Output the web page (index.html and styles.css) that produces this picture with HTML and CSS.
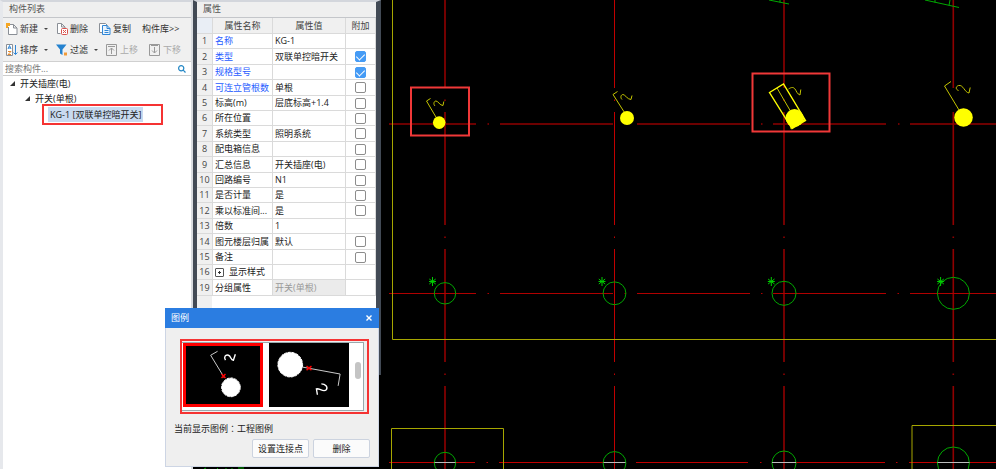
FILE: index.html
```html
<!DOCTYPE html>
<html lang="zh-CN">
<head>
  <meta charset="UTF-8">
  <meta name="viewport" content="width=device-width, initial-scale=1.0">
  <title>构件列表</title>
  <link rel="stylesheet" href="styles.css">
</head>
<body>
  <div class="workspace">

    <!-- drawing area -->
    <svg class="canvas" viewBox="193 0 803 469" preserveAspectRatio="xMinYMin slice">
      <g class="axis">
        <path class="thick" d="M445 0V88M445 99.500v1.500M445 112V225M445 236.500v1.500M445 249V362M445 373.500v1.500M445 386V469"/>
        <path class="bright" d="M614.500 0V88M614.500 99.500v1.500M614.500 112V225M614.500 236.500v1.500M614.500 249V362M614.500 373.500v1.500M614.500 386V469"/>
        <path class="thick" d="M784 0V88M784 99.500v1.500M784 112V225M784 236.500v1.500M784 249V362M784 373.500v1.500M784 386V469"/>
        <path class="thick" d="M953.300 0V88M953.300 112V225M953.300 236.500v1.500M953.300 249V362M953.300 373.500v1.500M953.300 386V469"/>
        <path class="thick" d="M389 124H476M487.500 124h1.500M500 124H613M637 124H750M761 124h1.500M773 124H886M898 124h1.500M910 124H996"/>
        <path d="M389 293.500H476M487.500 293.500h1.500M500 293.500H613M624.500 293.500h1.500M637 293.500H750M761 293.500h1.500M773 293.500H886M897.500 293.500h1.500M910 293.500H996"/>
        <path class="bright" d="M389 462.500H475M486.500 462.500h1.500M499 462.500H612M636 462.500H748M760 462.500h1.500M772 462.500H885M896 462.500h1.500M909 462.500H996"/>
      </g>
      <g class="wall">
        <path d="M392.500 0V339.500H996"/>
        <path d="M391.500 469V428.500H503.500V469"/>
        <path d="M912 469V425.500H996"/>
      </g>
      <g class="column">
        <circle cx="445" cy="293.300" r="10.700"/>
        <circle cx="614.500" cy="293.300" r="11.400"/>
        <circle cx="784" cy="293.300" r="12"/>
        <circle cx="953.400" cy="293.300" r="16"/>
        <circle cx="445" cy="463" r="10.700"/>
        <circle cx="614.500" cy="463" r="11.400"/>
        <circle cx="784" cy="463" r="12"/>
        <circle cx="953.400" cy="463" r="16"/>
        <path d="M769 0l20 4M780 0v2.500M925 0l34 7.500M935 0v2.500M950 0l-1 5.500"/>
        <path d="M204 469l2-1M217 469l1-1M226 468v1M232 468v1M238 468h6"/>
      </g>
      <g class="star">
        <path d="M432.500 277v9M429.300 279l6.400 5M435.700 279l-6.400 5M429 281.500h7"/>
        <path d="M602 277v9M598.800 279l6.400 5M605.200 279l-6.400 5M598.500 281.500h7"/>
        <path d="M771.300 277v9M768.100 279l6.400 5M774.500 279l-6.400 5M767.800 281.500h7"/>
        <path d="M940.600 277v9M937.400 279l6.400 5M943.800 279l-6.400 5M937.100 281.500h7"/>
      </g>
      <path class="beam" d="M434.500 462.500h21M603.500 462.500h22M772 462.500h24M937.500 462.500h32"/>
      <g class="switch">
        <path d="M430.500 98.500l-4 2.500 10 17M435 106c-2-2-1-5 1-5s4 4.500 7 4.500l.800-4"/>
        <circle cx="439.200" cy="122.600" r="6.300"/>
        <path d="M617.500 91.500l-4.500 3 11.500 18M622 99.500c-2-2-1-5 1-5s4.500 5 8 5l1-4"/>
        <circle cx="627" cy="118" r="7"/>
        <path d="M777 88l14 24M788.500 89c3-2 5-2 6.500 0s2 5 5 6l.800-5.500"/>
        <path class="picked" d="M769.500 92.500l14-8.500 22 36.500-13.500 8zM791 125v2.500l3-1.500M802.500 118l2 2-2.500 1.500"/>
        <circle cx="794.500" cy="118" r="9"/>
        <path d="M951 81.500l-6.500 4.500 14.500 24M958.500 90.500c-3-1-3-4 0-5 5-1 6 7 10.500 7.500l1.200-5.500"/>
        <circle cx="963.500" cy="117.500" r="9.300"/>
      </g>
      <g class="mark">
        <rect x="411" y="87.500" width="58" height="48"/>
        <rect x="752.500" y="73.500" width="77" height="58"/>
      </g>
    </svg>

    <aside class="panel list-panel">
      <h2 class="panel-title">构件列表</h2>
      <div class="toolbar">
        <div class="tool-row">
          <button class="tool drop"><svg class="icon" viewBox="0 0 12 12"><path class="ln" d="M3 1.500h4.500L11 5v6.500H2.500V4M7.500 1.500V5H11"/><path fill="#f5a623" d="M0 0h4v3H2v2H0z"/></svg>新建</button>
          <button class="tool"><svg class="icon" viewBox="0 0 12 12"><path class="ln" d="M4.500 10.500H1.500V.500h4L9 4v1M5.500.500V4H9"/><rect x="5.500" y="5.500" width="6" height="6" rx="1" fill="#fff" stroke="#d9534f"/><path stroke="#d9534f" d="M7 7l3 3M10 7l-3 3"/></svg>删除</button>
          <button class="tool"><svg class="icon" viewBox="0 0 12 12"><path class="ln" d="M3 9.500H.500V.500h6l2 2"/><path fill="#eaf4fd" stroke="#2f86d6" d="M3.500 2.500H8L11 5.500v6H3.500zM8 2.500v3h3M5.500 7.500h4M5.500 9.500h4"/></svg>复制</button>
          <button class="tool">构件库&gt;&gt;</button>
        </div>
        <div class="tool-row">
          <button class="tool drop"><svg class="icon" viewBox="0 0 12 12"><path class="ln" d="M.500.500h6v11h-6z"/><path fill="none" stroke="#2f86d6" d="M2 5l1.500-3.500L5 5M2.500 4h2M9.500 1v9.500M7.500 8.500l2 2 2-2"/><path fill="none" stroke="#e58a2e" d="M2 7.500h3L2 10.500h3"/></svg>排序</button>
          <button class="tool drop"><svg class="icon" viewBox="0 0 12 12"><path fill="#2482cf" d="M0 .500h10.500L6.500 5.500V11L4 9.500v-4z"/><path fill="#f29b38" d="M8 8.500h3v3H8z"/></svg>过滤</button>
          <button class="tool" disabled><svg class="icon" viewBox="0 0 12 12"><path fill="none" stroke="#999" d="M.500.500h10v11H.500zM2 2.500h7M5.500 10V4M3 6.500L5.500 4 8 6.500"/></svg>上移</button>
          <button class="tool" disabled><svg class="icon" viewBox="0 0 12 12"><path fill="none" stroke="#999" d="M.500.500h10v11H.500zM2 1.500h7M5.500 3v6M3 6.500L5.500 9 8 6.500"/></svg>下移</button>
        </div>
      </div>
      <div class="search">
        <input class="search-input" type="search" placeholder="搜索构件..." aria-label="搜索构件">
        <button class="search-btn" aria-label="搜索"><svg class="search-icon" viewBox="0 0 8 8"><circle cx="3.200" cy="3.200" r="2.600"/><path d="M5.200 5.200L7.500 7.500"/></svg></button>
      </div>
      <ul class="tree">
        <li>
          <span class="node">开关插座(电)</span>
          <ul>
            <li>
              <span class="node">开关(单根)</span>
              <div class="leaf-mark"><span class="leaf">KG-1 [双联单控暗开关]</span></div>
            </li>
          </ul>
        </li>
      </ul>
    </aside>

    <section class="panel prop-panel">
      <h2 class="panel-title">属性</h2>
      <table class="props">
        <colgroup><col class="c-num"><col class="c-name"><col><col class="c-add"></colgroup>
        <thead>
          <tr><th></th><th>属性名称</th><th>属性值</th><th>附加</th></tr>
        </thead>
        <tbody>
          <tr><th>1</th><td class="key">名称</td><td>KG-1</td><td></td></tr>
          <tr><th>2</th><td class="key">类型</td><td>双联单控暗开关</td><td><input type="checkbox" aria-label="类型" checked></td></tr>
          <tr><th>3</th><td class="key">规格型号</td><td></td><td><input type="checkbox" aria-label="规格型号" checked></td></tr>
          <tr><th>4</th><td class="key">可连立管根数</td><td>单根</td><td><input type="checkbox" aria-label="可连立管根数"></td></tr>
          <tr><th>5</th><td>标高(m)</td><td>层底标高+1.4</td><td><input type="checkbox" aria-label="标高"></td></tr>
          <tr><th>6</th><td>所在位置</td><td></td><td><input type="checkbox" aria-label="所在位置"></td></tr>
          <tr><th>7</th><td>系统类型</td><td>照明系统</td><td><input type="checkbox" aria-label="系统类型"></td></tr>
          <tr><th>8</th><td>配电箱信息</td><td></td><td><input type="checkbox" aria-label="配电箱信息"></td></tr>
          <tr><th>9</th><td>汇总信息</td><td>开关插座(电)</td><td><input type="checkbox" aria-label="汇总信息"></td></tr>
          <tr><th>10</th><td>回路编号</td><td>N1</td><td><input type="checkbox" aria-label="回路编号"></td></tr>
          <tr><th>11</th><td>是否计量</td><td>是</td><td><input type="checkbox" aria-label="是否计量"></td></tr>
          <tr><th>12</th><td>乘以标准间...</td><td>是</td><td><input type="checkbox" aria-label="乘以标准间"></td></tr>
          <tr><th>13</th><td>倍数</td><td>1</td><td></td></tr>
          <tr><th>14</th><td>图元楼层归属</td><td>默认</td><td><input type="checkbox" aria-label="图元楼层归属"></td></tr>
          <tr><th>15</th><td>备注</td><td></td><td><input type="checkbox" aria-label="备注"></td></tr>
          <tr><th>16</th><td><button class="expand" aria-label="展开显示样式"></button>显示样式</td><td></td><td></td></tr>
          <tr><th>19</th><td>分组属性</td><td class="locked">开关(单根)</td><td></td></tr>
        </tbody>
      </table>
    </section>

    <div class="dialog" role="dialog" aria-labelledby="legend-title">
      <header class="dialog-head">
        <h2 id="legend-title">图例</h2>
        <button class="close" aria-label="关闭"><svg viewBox="0 0 6 6"><path d="M.500.500l5 5M5.500.500l-5 5"/></svg></button>
      </header>
      <div class="dialog-body">
        <div class="legend-mark">
          <div class="legend-list">
            <button class="legend selected" aria-label="图例 1">
              <svg viewBox="0 0 81 64">
                <path d="M35 8l-7 4 14 23"/>
                <path class="num" d="M43 17c-2-3 0-6 3-5 3 1 2 5 5 5l2-6"/>
                <circle cx="48.500" cy="44.500" r="9.500"/>
                <path class="joint" d="M39 31l4 4M43 31l-4 4"/>
              </svg>
            </button>
            <button class="legend" aria-label="图例 2">
              <svg viewBox="0 0 81 64">
                <path d="M34 24l38 7-2 12"/>
                <path class="num" d="M53 41c4 0 7 3 5 6-3 3-7-2-10-1l1 6"/>
                <circle cx="21.500" cy="21.500" r="12.500"/>
                <path class="joint" d="M38 23l5 4M43 23l-5 4"/>
              </svg>
            </button>
            <span class="scrollbar"></span>
          </div>
        </div>
        <p class="current">当前显示图例<span class="colon" lang="zh-TW">：</span>工程图例</p>
        <div class="actions">
          <button class="btn">设置连接点</button>
          <button class="btn">删除</button>
        </div>
      </div>
    </div>

  </div>
</body>
</html>
```
FILE: styles.css
```css
* {
  box-sizing: border-box;
}

body {
  margin: 0;
  background: #000;
  color: #222;
  font-family: "Open Sans", "Noto Sans CJK SC", sans-serif;
  font-size: 9px;
  line-height: 14px;
}

h2, p, ul {
  margin: 0;
  padding: 0;
  font-size: 9px;
  font-weight: 400;
}

button, input {
  margin: 0;
  padding: 0;
  border: none;
  background: none;
  color: inherit;
  font: inherit;
}

.workspace {
  position: relative;
  display: grid;
  grid-template-columns: 193px 188px 1fr;
  grid-template-rows: 100vh;
  overflow: hidden;
}

/* drawing area */

.canvas {
  grid-area: 1 / 2 / 2 / 4;
  width: 100%;
  height: 100%;
  fill: none;
}

.axis path {
  stroke: #b00000;
}

.axis .thick {
  stroke: #900000;
  stroke-width: 1.6;
}

.axis .bright {
  stroke: #c00000;
}

.wall path {
  stroke: #a6a600;
}

.column {
  stroke: #00a800;
}

.star {
  stroke: #00cc00;
}

.beam {
  stroke: #bbb;
}

.switch path {
  stroke: #c4c400;
}

.switch .picked {
  stroke: #ff0;
  stroke-width: 1.4;
}

.switch circle {
  fill: #ff0;
}

.mark rect {
  stroke: #f03838;
  stroke-width: 2;
}

/* panels */

.panel {
  background: #fff;
  border-top: 2px solid #d3d6dc;
}

.panel-title {
  height: 16px;
  padding-left: 6px;
  border-bottom: 1px solid #c4c6ca;
  background: #efefef;
  color: #555;
}

.list-panel {
  grid-area: 1 / 1;
  border-left: 3px solid #e6e8ec;
  border-right: 2px solid #d9dce0;
}

.toolbar {
  display: flex;
  flex-direction: column;
  gap: 5px;
  padding: 3px 3px;
  border-bottom: 1px solid #d0d0d0;
  background: #f0f0f0;
}

.tool-row {
  display: flex;
  gap: 11px;
}

.tool {
  display: flex;
  align-items: center;
  gap: 2px;
  height: 16px;
  color: #333;
  white-space: nowrap;
}

.tool:disabled {
  color: #aaa;
}

.drop {
  margin-right: -3px;
}

.drop::after {
  content: "";
  margin-left: 4px;
  border: 2px solid transparent;
  border-top-color: #444;
  border-bottom: none;
}

.icon {
  width: 12px;
  height: 12px;
}

.icon .ln {
  fill: #fff;
  stroke: #8a8f96;
}

.search {
  display: flex;
  align-items: center;
  height: 14px;
  padding-right: 5px;
  border-bottom: 1px solid #ccc;
}

.search-input {
  flex: 1;
  min-width: 0;
  height: 12px;
  padding-left: 2px;
  outline: none;
}

.search-input::placeholder {
  color: #777;
}

.search-btn {
  display: flex;
}

.search-icon {
  width: 8px;
  height: 8px;
  fill: none;
  stroke: #2487c5;
  stroke-width: 1.2;
}

.tree {
  padding: 0 0 0 7px;
  list-style: none;
}

.tree ul {
  padding-left: 15px;
  list-style: none;
}

.node {
  display: flex;
  align-items: center;
  gap: 5px;
  height: 15px;
}

.node::before {
  content: "";
  border-left: 5px solid transparent;
  border-bottom: 5px solid #333;
}

.leaf-mark {
  display: flex;
  width: 121px;
  margin: -2px 0 0 17px;
  padding: 1px 4px;
  border: 2px solid #f53333;
}

.leaf {
  height: 15px;
  padding: 0 2px;
  background: #c8daf0;
  line-height: 15px;
  white-space: nowrap;
}

.prop-panel {
  grid-area: 1 / 2;
  height: 80%;
  border-left: 4px solid #424a55;
  border-right: 5px solid #424a55;
  background: linear-gradient(90deg, #f0f0f0 15px, #fff 15px);
}

/* properties */

.props {
  width: 100%;
  table-layout: fixed;
  border-spacing: 0;
}

.c-num {
  width: 16px;
}

.c-name {
  width: 60px;
}

.c-add {
  width: 30px;
}

.props th,
.props td {
  height: 15px;
  padding: 0;
  border-right: 1px solid #dadada;
  border-bottom: 1px solid #dadada;
  font-weight: 400;
  text-align: left;
  white-space: nowrap;
}

.props tr:nth-child(5n + 2) > *,
.props tr:nth-child(5n + 4) > *,
.props thead th {
  height: 16px;
}

.props th {
  background: #f0f0f0;
  color: #444;
  text-align: center;
}

.props thead th:first-child {
  background: #e9eef5;
}

.props td {
  padding-left: 2px;
  background: #fff;
}

.props td:last-child {
  padding: 0;
  line-height: 0;
  text-align: center;
}

.props .key {
  color: #1f5cff;
}

.props .locked {
  background: #ebebeb;
  color: #999;
}

.props input {
  appearance: none;
  display: inline-flex;
  justify-content: center;
  width: 11px;
  height: 11px;
  border: 1px solid #8c8c8c;
  border-radius: 2px;
  background: #fff;
  vertical-align: middle;
}

.props input:checked {
  border-color: #459bf5;
  background: #459bf5;
}

.props input:checked::before {
  content: "";
  width: 4px;
  height: 7px;
  border: solid #fff;
  border-width: 0 1px 1px 0;
  transform: rotate(45deg);
}

.expand {
  width: 9px;
  height: 9px;
  margin-right: 5px;
  border: 1px solid #555;
  border-radius: 1px;
  background:
    linear-gradient(#333, #333) center / 3px 1px no-repeat,
    linear-gradient(#333, #333) center / 1px 3px no-repeat;
  vertical-align: -1px;
}

/* legend dialog, floats over panels and drawing */

.dialog {
  position: absolute;
  top: 308px;
  left: 165px;
  width: 214px;
  border: 1px solid #cdd5e4;
  border-top: none;
  background: #efefef;
}

.dialog-head {
  display: flex;
  align-items: center;
  justify-content: space-between;
  height: 20px;
  margin: 0 -1px;
  padding: 0 7px 0 6px;
  background: #2b7de1;
  color: #fff;
}

.close {
  display: flex;
}

.close svg {
  width: 6px;
  height: 6px;
  stroke: #fff;
  stroke-width: 1.4;
}

.dialog-body {
  padding: 11px 8px 8px;
}

.legend-mark {
  margin: 0 1px 0 6px;
  padding: 1px 3px 1px 0;
  border: 2px solid #f53333;
}

.legend-list {
  display: flex;
  gap: 6px;
  height: 69px;
  padding-left: 1px;
  border: 1px solid #9aa9ad;
  border-left: none;
  background: #fff;
}

.legend {
  flex: 1;
  display: flex;
  height: 64px;
  background: #000;
}

.legend.selected {
  box-shadow: inset 0 0 0 3px #f00;
}

.legend svg {
  width: 100%;
  height: 64px;
  fill: none;
  stroke: #ccc;
}

.legend circle {
  fill: #fff;
  stroke: #fff;
  stroke-dasharray: 3 1;
}

.legend .num {
  stroke: #fff;
  stroke-width: 1.4;
}

.legend .joint {
  stroke: #f00;
  stroke-width: 1.5;
}

.scrollbar {
  width: 6px;
  height: 17px;
  margin: 19px 2px 0 0;
  border-radius: 3px;
  background: #c4c4c4;
}

.current {
  margin-top: 8px;
}

.colon {
  font-family: "Noto Sans CJK TC", sans-serif;
}

.actions {
  display: flex;
  justify-content: flex-end;
  gap: 4px;
  margin-top: 3px;
}

.btn {
  width: 57px;
  height: 19px;
  border: 1px solid #ccd3df;
  border-radius: 2px;
  background: #fbfbfb;
}
```
